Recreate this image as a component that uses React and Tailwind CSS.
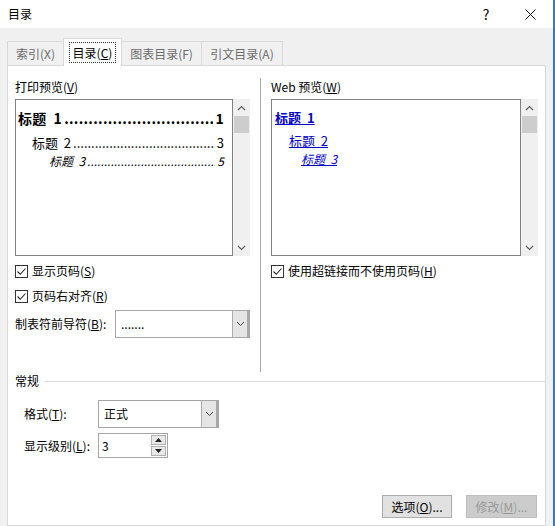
function Chevron({ up, className = "" }) {
  return (
    <svg width="9" height="6" viewBox="0 0 9 6" className={className}>
      <polyline
        points={up ? "1,5 4.5,1.5 8,5" : "1,1 4.5,4.5 8,1"}
        fill="none"
        stroke="#606060"
        strokeWidth="1.2"
      />
    </svg>
  );
}

function ScrollBar() {
  return (
    <div className="w-[17px] bg-[#f0f0f0] flex flex-col items-center">
      <div className="h-[17px] flex items-center justify-center">
        <Chevron up />
      </div>
      <div className="w-[15px] h-[17px] bg-[#cdcdcd]" />
      <div className="flex-1" />
      <div className="h-[17px] flex items-center justify-center">
        <Chevron />
      </div>
    </div>
  );
}

function Check({ label, k }) {
  return (
    <div className="flex items-center h-[16px]">
      <div className="w-[13px] h-[13px] border border-[#333333] bg-white flex items-center justify-center">
        <svg width="11" height="11" viewBox="0 0 11 11">
          <polyline points="1.5,5.5 4.2,8.3 9.5,2.5" fill="none" stroke="#222" strokeWidth="1.1" />
        </svg>
      </div>
      <span className="ml-[4px]">
        {label}(<u>{k}</u>)
      </span>
    </div>
  );
}

function Select({ value, w, h }) {
  return (
    <div className={`flex border border-[#a6a6a6] bg-white ${w} ${h}`}>
      <div className="flex-1 pl-[5px] flex items-center">{value}</div>
      <div className="w-[17px] bg-[#e5e5e5] border-l border-[#acacac] border-r-2 border-r-[#a9a9a9] flex items-center justify-center">
        <svg width="9" height="6" viewBox="0 0 9 6">
          <polyline points="1,1 4.5,4.5 8,1" fill="none" stroke="#444" strokeWidth="1" />
        </svg>
      </div>
    </div>
  );
}

// dot leader between a heading and its page number
function Leader({ children, num, className }) {
  return (
    <div className={`flex items-baseline ${className}`}>
      <span className="whitespace-nowrap shrink-0">{children}</span>
      <span className="flex-1 min-w-0 overflow-hidden whitespace-nowrap mx-[2px] h-[1.2em]">
        ..........................................................................................
      </span>
      <span className="shrink-0">{num}</span>
    </div>
  );
}

export default function App() {
  return (
    <div className="w-[555px] h-[526px] overflow-hidden bg-[#f0f0f0] border-r-2 border-[#2b7bd0] flex flex-col text-[12px] leading-[16px] text-black font-['Microsoft_YaHei_UI','Noto_Sans_CJK_SC',sans-serif]">
      {/* title bar */}
      <div className="h-[28px] bg-white flex items-center shrink-0">
        <span className="pl-[8px]">目录</span>
        <div className="ml-auto flex h-full">
          <div className="w-[44px] flex items-center justify-center text-[14px]">?</div>
          <div className="w-[45px] flex items-center justify-center">
            <svg width="11" height="11" viewBox="0 0 11 11">
              <path d="M0.5 0.5 L10.5 10.5 M10.5 0.5 L0.5 10.5" stroke="#111" strokeWidth="1" />
            </svg>
          </div>
        </div>
      </div>

      {/* tabs */}
      <div className="mt-[10px] ml-[7px] flex items-end h-[28px] shrink-0 relative z-10">
        <div className="w-[56px] h-[25px] border-l border-t border-[#d9d9d9] flex items-center justify-center text-[#6b6b6b]">
          索引(X)
        </div>
        <div className="w-[59px] h-[28px] bg-white border-l border-t border-r border-[#d9d9d9] flex items-center justify-center">
          <div className="border border-dotted border-[#333] px-[3px] h-[21px] flex items-center">
            目录(<u>C</u>)
          </div>
        </div>
        <div className="w-[79px] h-[25px] border-t border-[#d9d9d9] flex items-center justify-center text-[#6b6b6b]">
          图表目录(F)
        </div>
        <div className="w-[82px] h-[25px] border-l border-t border-r border-[#d9d9d9] flex items-center justify-center text-[#6b6b6b]">
          引文目录(A)
        </div>
      </div>

      {/* panel */}
      <div className="-mt-px ml-[7px] w-[539px] flex-1 bg-white border border-[#d9d9d9] flex flex-col">
        <div className="flex">
          {/* print preview */}
          <div className="ml-[7px] w-[235px] pt-[13px]">
            <div>
              打印预览(<u>V</u>)
            </div>
            <div className="mt-[4px] flex h-[157px]">
              <div className="w-[218px] border border-[#828282] pl-[2px] pr-[8px]">
                <Leader num="1" className="mt-[8px] font-bold text-[14px] leading-[20px] tracking-[0.3px]">
                  标题&nbsp;&nbsp;1
                </Leader>
                <Leader num="3" className="mt-[6px] pl-[14px] text-[13px] leading-[18px]">
                  标题&nbsp;&nbsp;2
                </Leader>
                <Leader num="5" className="mt-px pl-[31px] italic text-[12px] leading-[16px]">
                  标题&nbsp;&nbsp;3
                </Leader>
              </div>
              <ScrollBar />
            </div>
            <div className="mt-[7px]">
              <Check label="显示页码" k="S" />
            </div>
            <div className="mt-[9px]">
              <Check label="页码右对齐" k="R" />
            </div>
            <div className="mt-[6px] flex items-center">
              <span className="w-[100px]">
                制表符前导符(<u>B</u>):
              </span>
              <Select value="......." w="w-[135px]" h="h-[28px]" />
            </div>
          </div>

          {/* divider */}
          <div className="ml-[10px] mt-[12px] w-px h-[294px] bg-[#a8a8a8]" />

          {/* web preview */}
          <div className="ml-[10px] w-[267px] pt-[13px]">
            <div>
              Web 预览(<u>W</u>)
            </div>
            <div className="mt-[4px] flex h-[157px]">
              <div className="w-[250px] border border-[#828282] pl-[3px] text-[#0000cc]">
                <div className="mt-[8px] font-bold text-[13px] leading-[20px] underline">标题&nbsp;&nbsp;1</div>
                <div className="mt-[4px] pl-[14px] text-[13px] leading-[18px] underline">标题&nbsp;&nbsp;2</div>
                <div className="mt-px pl-[26px] italic text-[12px] leading-[16px] underline">标题&nbsp;&nbsp;3</div>
              </div>
              <ScrollBar />
            </div>
            <div className="mt-[7px]">
              <Check label="使用超链接而不使用页码" k="H" />
            </div>
          </div>
        </div>

        {/* general */}
        <div className="mt-px flex items-center h-[16px]">
          <span className="ml-[7px]">常规</span>
          <div className="ml-[5px] flex-1 h-px bg-[#dcdcdc]" />
        </div>
        <div className="mt-[11px] flex items-center">
          <span className="ml-[16px] w-[74px]">
            格式(<u>T</u>):
          </span>
          <Select value="正式" w="w-[121px]" h="h-[28px]" />
        </div>
        <div className="mt-[5px] flex items-center">
          <span className="ml-[16px] w-[74px]">
            显示级别(<u>L</u>):
          </span>
          <div className="w-[70px] h-[25px] border border-[#a6a6a6] flex bg-white">
            <div className="flex-1 pl-[3px] flex items-center">3</div>
            <div className="w-[15px] my-px mr-px flex flex-col gap-px">
              <div className="flex-1 bg-[#e8e8e8] border border-[#b0b0b0] flex items-center justify-center">
                <svg width="7" height="4" viewBox="0 0 7 4">
                  <polygon points="0,4 3.5,0 7,4" fill="#222" />
                </svg>
              </div>
              <div className="flex-1 bg-[#e8e8e8] border border-[#b0b0b0] flex items-center justify-center">
                <svg width="7" height="4" viewBox="0 0 7 4">
                  <polygon points="0,0 3.5,4 7,0" fill="#222" />
                </svg>
              </div>
            </div>
          </div>
        </div>

        {/* buttons */}
        <div className="mt-[37px] flex justify-end gap-[14px] pr-[8px]">
          <button className="w-[70px] h-[23px] bg-[#e1e1e1] border border-[#adadad] flex items-center justify-center">
            选项(<u>O</u>)...
          </button>
          <button className="w-[71px] h-[23px] bg-[#cccccc] border border-[#bfbfbf] text-[#9a9a9a] flex items-center justify-center">
            修改(<u>M</u>)...
          </button>
        </div>
      </div>
    </div>
  );
}
